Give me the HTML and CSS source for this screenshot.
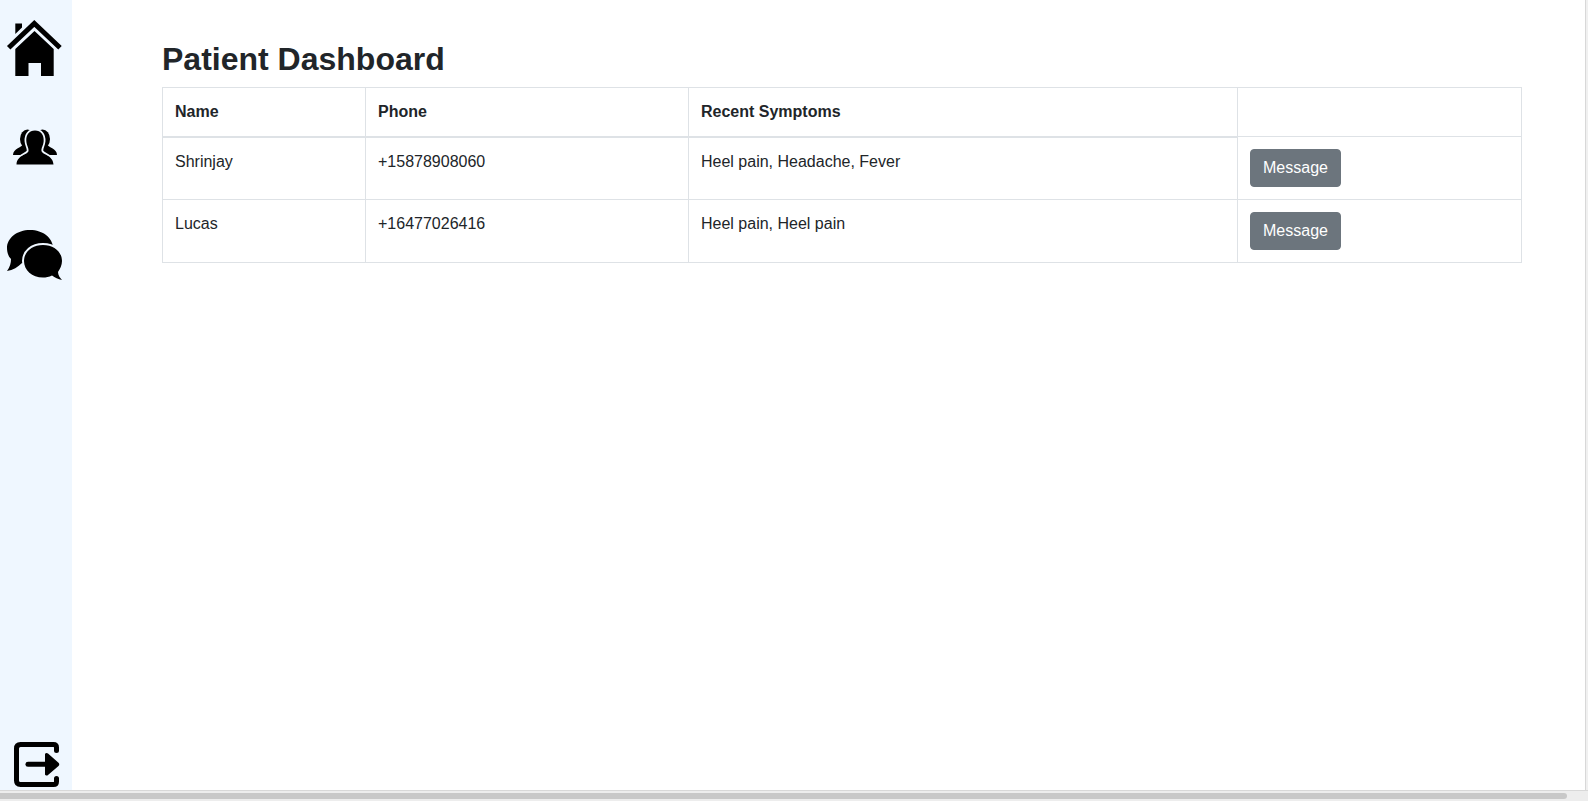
FILE: index.html
```html
<!DOCTYPE html>
<html lang="en">
<head>
<meta charset="utf-8">
<title>Patient Dashboard</title>
<link rel="stylesheet" href="styles.css">
</head>
<body>
<div class="window">
  <div class="page">
    <nav class="sidebar">
      <a class="nav-icon nav-home" href="#" aria-label="Home">
        <svg width="72" height="70" viewBox="0 10 72 70">
          <path d="M15.300 23.500H22V27.500L15.300 34Z"/>
          <path d="M8.700 47.800L34.300 23.500L60 47.800" fill="none" stroke="#000" stroke-width="5"/>
          <path d="M34.500 31L53.700 49V76H41V63H28.500V76H15.300V49Z"/>
        </svg>
      </a>
      <a class="nav-icon nav-users" href="#" aria-label="Patients">
        <svg width="72" height="60" viewBox="0 120 72 60">
          <ellipse cx="27.500" cy="139" rx="7.500" ry="9.500"/>
          <ellipse cx="42.500" cy="139" rx="7.500" ry="9.500"/>
          <path d="M13 155C13 148 22 148 24 143H46C48 148 57 148 57 155Z"/>
          <path d="M35 130.500C41 130.500 44 135 43.700 141C43.300 146 41 148 41.500 151C42.500 155 53 155 53.500 164.500H16.500C17 155 27.500 155 28.500 151C29 148 26.700 146 26.300 141C26 135 29 130.500 35 130.500Z" stroke="#eff7ff" stroke-width="3.500" paint-order="stroke"/>
        </svg>
      </a>
      <a class="nav-icon nav-chat" href="#" aria-label="Messages">
        <svg width="72" height="70" viewBox="0 220 72 70">
          <path d="M30 230C43 230 53 238 53 248C53 258 43 264 30 264C27 264 25 264 22 263C18 267 13 270 7 271C10 267 11 263 11 259C8 256 7 252 7 248C7 238 17 230 30 230Z"/>
          <path d="M43 245C54 245 62 252 62 261C62 265 60 269 58 272C58 275 60 278 62 280C58 279 55 278 52 275.500C49 277 46 277.500 43 277.500C32 277.500 24 270 24 261C24 252 32 245 43 245Z" stroke="#eff7ff" stroke-width="4" paint-order="stroke"/>
        </svg>
      </a>
      <a class="nav-icon nav-logout" href="#" aria-label="Log out">
        <svg width="72" height="50" viewBox="0 740 72 50">
          <path d="M56.500 750.500V747.500C56.500 745.500 55.500 744.500 53.500 744.500H20.500C18 744.500 16.500 746 16.500 748.500V780.500C16.500 783 18 784.500 20.500 784.500H53.500C55.500 784.500 56.500 783.500 56.500 781.500V778.500" fill="none" stroke="#000" stroke-width="5" stroke-linecap="round"/>
          <path d="M28 764.300H46" fill="none" stroke="#000" stroke-width="5" stroke-linecap="round"/>
          <path d="M45 754C45.500 752.800 47 752.500 48 753.500L58.500 762.800C59.500 763.800 59.500 765 58.500 766L48 775C47 776 45.500 775.500 45 774.500Z"/>
        </svg>
      </a>
    </nav>
    <main class="content">
      <h2 class="title">Patient Dashboard</h2>
      <table class="table">
        <thead>
          <tr>
            <th class="col-name">Name</th>
            <th class="col-phone">Phone</th>
            <th class="col-symptoms">Recent Symptoms</th>
            <td class="col-action"></td>
          </tr>
        </thead>
        <tbody>
          <tr>
            <td class="first-row">Shrinjay</td>
            <td class="first-row">+15878908060</td>
            <td class="first-row">Heel pain, Headache, Fever</td>
            <td><button class="btn" type="button">Message</button></td>
          </tr>
          <tr>
            <td>Lucas</td>
            <td>+16477026416</td>
            <td>Heel pain, Heel pain</td>
            <td><button class="btn" type="button">Message</button></td>
          </tr>
        </tbody>
      </table>
    </main>
    <div class="v-track"></div>
  </div>
  <div class="h-track"><div class="h-thumb"></div></div>
</div>
</body>
</html>
```
FILE: styles.css
```css
* {
  box-sizing: border-box;
}

html,
body {
  margin: 0;
  height: 100%;
  overflow: hidden;
}

body {
  background: #fff;
  color: #212529;
  font-family: "Liberation Sans", Arial, sans-serif;
  font-size: 16px;
  line-height: 1.5;
}

.window {
  display: flex;
  flex-direction: column;
  height: 100vh;
}

.page {
  display: flex;
  flex: 1;
  min-height: 0;
}

.sidebar {
  display: flex;
  flex-direction: column;
  flex: none;
  width: 72px;
  background: #eff7ff;
}

.nav-icon {
  display: block;
  height: auto;
}

.nav-icon svg {
  display: block;
}

.nav-home {
  margin-top: 10px;
}

.nav-users {
  margin-top: 40px;
}

.nav-chat {
  margin-top: 40px;
}

.nav-logout {
  margin-top: auto;
}

.content {
  flex: 1;
  min-width: 0;
  padding: 40px 63px 0 90px;
}

.title {
  margin: 0 0 9px;
  font-size: 32px;
  font-weight: 700;
  line-height: 1.2;
  color: #212529;
}

.table {
  width: 100%;
  border-collapse: collapse;
  table-layout: fixed;
  color: #212529;
}

.table th,
.table td {
  padding: 12px;
  border: 1px solid #dee2e6;
  text-align: left;
  vertical-align: top;
}

.table th {
  font-weight: 700;
}

.table .first-row {
  padding-top: 13px;
  box-shadow: inset 0 1px 0 #dee2e6;
}

.col-name {
  width: 203px;
}

.col-phone {
  width: 323px;
}

.col-symptoms {
  width: 549px;
}

.btn {
  display: inline-block;
  padding: 6px 12px;
  border: 1px solid #6c757d;
  border-radius: 4px;
  background: #6c757d;
  color: #fff;
  font-family: inherit;
  font-size: 16px;
  line-height: 1.5;
}

.v-track {
  flex: none;
  width: 3px;
  background: #f0f0f0;
  border-left: 1px solid #d8d8d8;
}

.h-track {
  flex: none;
  height: 11px;
  padding: 2px 0 3px;
  background: #ededed;
  border-top: 1px solid #d8d8d8;
}

.h-thumb {
  width: 1567px;
  height: 6px;
  border-radius: 0 3px 3px 0;
  background: #c8c8c8;
}
```
